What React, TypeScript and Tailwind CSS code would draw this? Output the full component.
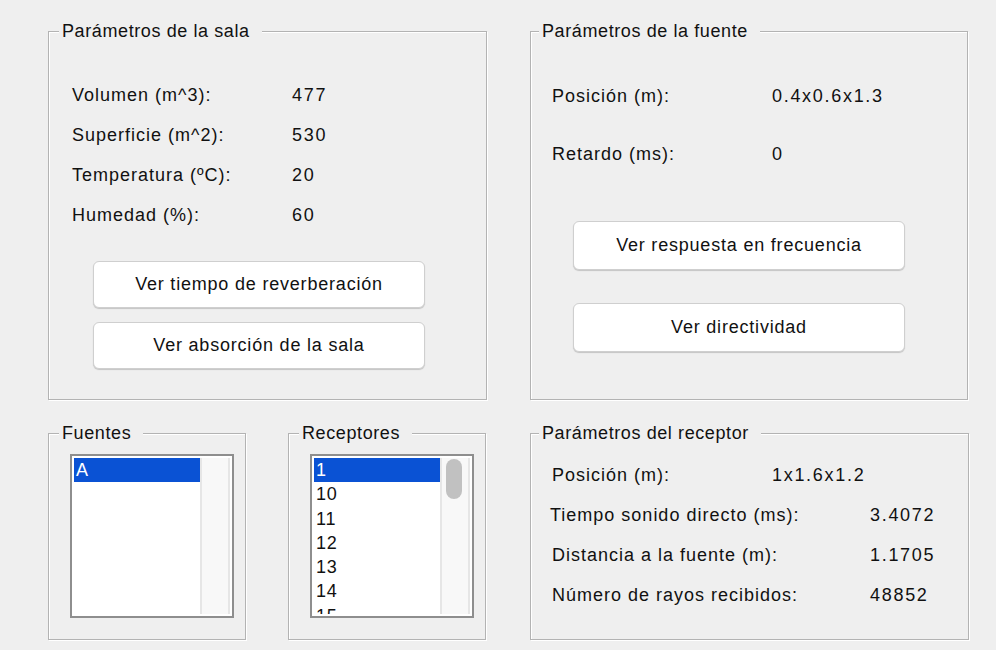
import React from "react";

const font = { fontFamily: '"Liberation Sans", Arial, Helvetica, sans-serif' };

function Panel({ title, className, titleLeft = "left-[10px]", children }: { title: string; className: string; titleLeft?: string; children?: React.ReactNode }) {
  return (
    <div className={`relative border border-[#b3b3b3] shadow-[1px_1px_0_#ffffff,inset_1px_1px_0_#ffffff] ${className}`}>
      <span className={`absolute ${titleLeft} top-[-12px] bg-[#efefef] pl-[3px] pr-[12px] text-[18px] leading-[22px] tracking-[0.6px] text-[#111]`}>
        {title}
      </span>
      {children}
    </div>
  );
}

function Row({ label, value, labelW, h, className = "" }: { label: string; value: string; labelW: string; h: string; className?: string }) {
  return (
    <div className={`flex items-center ${h} ${className}`}>
      <span className={`${labelW} shrink-0 tracking-[1px]`}>{label}</span>
      <span className="tracking-[1.7px]">{value}</span>
    </div>
  );
}

function Btn({ children, className = "" }: { children: React.ReactNode; className?: string }) {
  return (
    <div className={`flex w-[332px] items-center justify-center rounded-[6px] border border-[#cfcfcf] bg-white shadow-[0_1px_1px_rgba(0,0,0,0.18)] text-[18px] tracking-[0.8px] ${className}`}>
      {children}
    </div>
  );
}

function ListBox({ items, scroll }: { items: string[]; scroll: boolean }) {
  return (
    <div className="ml-[21px] mt-[20px] flex h-[164px] w-[164px] border-2 border-[#8e8e8e] bg-white p-[2px]">
      <div className="flex w-[126px] flex-col overflow-hidden text-[18px] leading-[24.3px] tracking-[0.8px]">
        {items.map((it, i) => (
          <div key={i} className={`h-[24.3px] shrink-0 pl-[2px] ${i === 0 ? "bg-[#0a52d4] text-white" : "text-[#111]"}`}>
            {it}
          </div>
        ))}
      </div>
      <div className="flex w-[30px] border-l-2 border-r-2 border-[#e6e6e6] bg-[#f8f8f8] pl-[4px] pt-[1px]">
        {scroll && <div className="h-[40px] w-[16px] rounded-full bg-[#c1c1c1]" />}
      </div>
    </div>
  );
}

export default function App() {
  return (
    <div className="h-[650px] w-[996px] overflow-hidden bg-[#efefef] text-[18px] text-[#111]" style={font}>
      <div className="flex gap-[43px] pl-[48px] pt-[31px]">
        <Panel title="Parámetros de la sala" className="h-[369px] w-[439px]">
          <div className="pl-[23px] pt-[43px]">
            <Row label="Volumen (m^3):" value="477" labelW="w-[220px]" h="h-[40px]" />
            <Row label="Superficie (m^2):" value="530" labelW="w-[220px]" h="h-[40px]" />
            <Row label="Temperatura (ºC):" value="20" labelW="w-[220px]" h="h-[40px]" />
            <Row label="Humedad (%):" value="60" labelW="w-[220px]" h="h-[40px]" />
          </div>
          <div className="ml-[44px] mt-[26px] flex flex-col gap-[14px]">
            <Btn className="h-[47px]">Ver tiempo de reverberación</Btn>
            <Btn className="h-[47px]">Ver absorción de la sala</Btn>
          </div>
        </Panel>
        <Panel title="Parámetros de la fuente" titleLeft="left-[8px]" className="h-[369px] w-[438px]">
          <div className="pl-[21px] pt-[35px]">
            <Row label="Posición (m):" value="0.4x0.6x1.3" labelW="w-[220px]" h="h-[58px]" />
            <Row label="Retardo (ms):" value="0" labelW="w-[220px]" h="h-[58px]" />
          </div>
          <div className="ml-[42px] mt-[38px] flex flex-col gap-[33px]">
            <Btn className="h-[49px]">Ver respuesta en frecuencia</Btn>
            <Btn className="h-[49px]">Ver directividad</Btn>
          </div>
        </Panel>
      </div>
      <div className="mt-[33px] flex pl-[48px]">
        <Panel title="Fuentes" className="h-[207px] w-[198px]">
          <ListBox items={["A"]} scroll={false} />
        </Panel>
        <Panel title="Receptores" className="ml-[42px] h-[207px] w-[198px]">
          <ListBox items={["1", "10", "11", "12", "13", "14", "15"]} scroll={true} />
        </Panel>
        <Panel title="Parámetros del receptor" titleLeft="left-[8px]" className="ml-[44px] h-[207px] w-[439px]">
          <div className="pt-[21px]">
            <Row label="Posición (m):" value="1x1.6x1.2" labelW="w-[220px]" h="h-[40px]" className="pl-[21px]" />
            <Row label="Tiempo sonido directo (ms):" value="3.4072" labelW="w-[320px]" h="h-[40px]" className="pl-[19px]" />
            <Row label="Distancia a la fuente (m):" value="1.1705" labelW="w-[318px]" h="h-[40px]" className="pl-[21px]" />
            <Row label="Número de rayos recibidos:" value="48852" labelW="w-[318px]" h="h-[40px]" className="pl-[21px]" />
          </div>
        </Panel>
      </div>
    </div>
  );
}
